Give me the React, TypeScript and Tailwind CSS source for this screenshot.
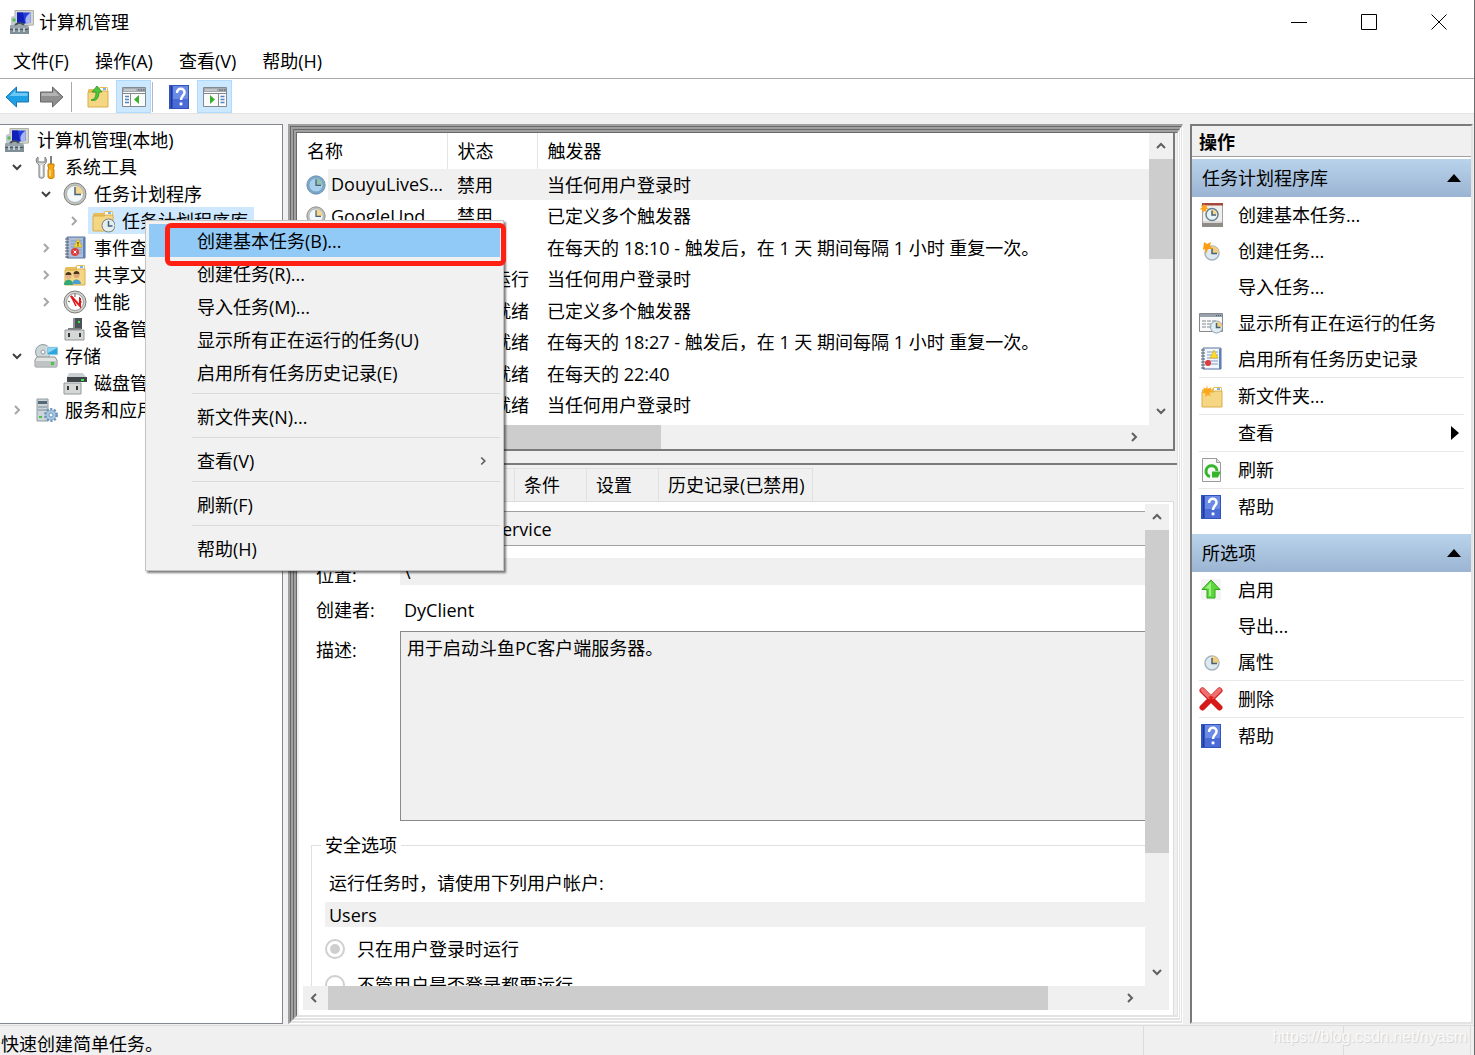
import type { ReactNode } from "react";
import clsx from "clsx";

/* ---------- Icons ---------- */

function Icon({ children, className = "w-6 h-6" }: { children: ReactNode; className?: string }) {
  return (
    <svg viewBox="0 0 24 24" className={clsx("shrink-0", className)} fill="none" aria-hidden="true">
      {children}
    </svg>
  );
}

function ComputerIcon() {
  return (
    <Icon>
      <path d="M5 .5h18.500v14.500L5 16z" fill="#d5d7cf" stroke="#b0b2a8" />
      <path d="M7 2.500h13.500v10.500L7 14z" fill="#2440dc" />
      <path d="M7 2.500h6l2 11-8 .5z" fill="#1020b8" />
      <path d="M20.500 2.500v10.500h-4.500c-2-4 1-8 4.500-10.500z" fill="#a9b4f2" />
      <path d="M1 7l5-2v11H1z" fill="#c4cace" />
      <path d="M2.500 8.500h3v3h-3z" fill="#4fc04a" />
      <path d="M5 17c0-5 9-5 9 0" stroke="#44525c" strokeWidth="1.800" />
      <path d="M0 15.500h18l1 2V24H0z" fill="#7f8f98" />
      <path d="M0 15.500h18v2.500H0z" fill="#98a5ac" />
      <path d="M0 19.500h18" stroke="#4a5962" />
      <path d="M4 18v4M9 18v4M14 18v4" stroke="#dde4e7" strokeWidth="1.500" />
    </Icon>
  );
}

function ToolsIcon() {
  return (
    <Icon>
      <path d="M5 10v12c0 1.500 5 1.500 5 0V10c3-2 3-6 1-8v5H4V2c-3 2-2 6 1 8z" fill="#d5d8d8" stroke="#777b7b" />
      <path d="M7.500 10v11" stroke="#fff" strokeWidth="1.500" />
      <path d="M17 1v9" stroke="#7d8080" strokeWidth="2" />
      <path d="M14 9h6v3l-1 1 1 2v7c0 2-6 2-6 0v-7l1-2-1-1z" fill="#f6a914" stroke="#c57e0b" />
      <path d="M16 15v6" stroke="#ffe08a" strokeWidth="1.500" />
    </Icon>
  );
}

function ClockIcon({ className, blue }: { className?: string; blue?: boolean }) {
  return (
    <Icon className={className}>
      <circle cx="12" cy="12" r="11" fill={blue ? "#7fa9cb" : "#c3c3bd"} stroke={blue ? "#5f8caf" : "#83837e"} />
      <circle cx="12" cy="12" r="8.500" fill={blue ? "#a9cfeb" : "#f3f8fb"} stroke={blue ? "#6f9dbd" : "#a8b2b8"} />
      <path d="M12 12V4a8 8 0 0 1 8 8z" fill={blue ? "#93c0b0" : "#f4d68e"} />
      <path d="M12 5v7.500h6" stroke="#456277" strokeWidth="1.500" />
    </Icon>
  );
}

function SmallClockIcon() {
  return (
    <Icon>
      <circle cx="13" cy="13" r="7" fill="#dfeaf0" stroke="#a5b5bf" strokeWidth="1.500" />
      <path d="M13 13V6a7 7 0 0 1 7 7z" fill="#f2cd7e" />
      <path d="M13 8v5.500h5" stroke="#456277" strokeWidth="1.500" />
    </Icon>
  );
}

function FolderShape() {
  return (
    <>
      <path d="M2 5l1-1h9l2-2h7l1 1v18H2z" fill="#e9bd57" />
      <path d="M14 3h7v3h-7z" fill="#fff" />
      <path d="M17 4h3" stroke="#4d9de0" strokeWidth="1.500" />
      <path d="M2 7h11l2-1h7v16H2z" fill="#f5d682" stroke="#d9ae4c" />
    </>
  );
}

const star = "M8 0l1 5 5-2-2 4 4 2-5 1 2 5-4-2-3 3v-5l-5-1 4-3-2-4 4 2z";

function FolderClockIcon() {
  return (
    <Icon>
      <FolderShape />
      <circle cx="17.500" cy="16.500" r="6.500" fill="#e6eff0" stroke="#74868d" />
      <path d="M17.500 12v5h4" stroke="#456277" strokeWidth="1.500" />
    </Icon>
  );
}

function FolderNewIcon() {
  return (
    <Icon>
      <g transform="translate(1 1)">
        <FolderShape />
      </g>
      <path d={star} fill="#ffa51c" transform="translate(2 1) scale(.75)" />
    </Icon>
  );
}

function FolderUpIcon() {
  return (
    <Icon>
      <FolderShape />
      <path d="M5 15c4-1 5-3 5-8H6l5-6 5 6h-3c0 6-3 10-8 8z" fill="#4ec63e" stroke="#2b9424" strokeWidth=".8" />
    </Icon>
  );
}

function NotebookIcon({ light }: { light?: boolean }) {
  return (
    <Icon>
      <path d="M4 1h18v21H4z" fill={light ? "#f2f6fd" : "#aebdd6"} stroke="#56739f" />
      <path d="M20 2h2v20h-2z" fill="#5c80bd" />
      <path d="M8 5h11M8 8h11M8 11h11M8 14h11M8 17h11" stroke="#7f9cc8" />
      <path d="M2 3h4M2 6h4M2 9h4M2 12h4M2 15h4M2 18h4M2 21h4" stroke="#565f6b" />
      <path d="M15 3l4 8h-8z" fill="#fcdb2c" stroke="#d8aa10" strokeWidth=".6" />
      {!light && <path d="M15 6v2.500M15 9.200v1" stroke="#222" />}
      <circle cx={light ? 9 : 12} cy="16" r={light ? 3 : 4} fill="#e03a3a" />
      {!light && <path d="M10.500 14.500l3 3m0-3l-3 3" stroke="#fff" />}
    </Icon>
  );
}

function SharedFolderIcon() {
  return (
    <Icon>
      <FolderShape />
      <path d="M1 22c0-7 9-7 9 0z" fill="#35a877" />
      <path d="M9 21c0-6 9-6 9 0z" fill="#4d9fd0" />
      <circle cx="5.500" cy="13" r="3" fill="#e3b48b" />
      <circle cx="13.500" cy="12" r="3" fill="#dba77b" />
      <path d="M2.500 12c0-4 6-4 6 0zM10.500 11c0-4 6-4 6 0z" fill="#493422" />
    </Icon>
  );
}

function GaugeIcon() {
  return (
    <Icon>
      <circle cx="12" cy="12" r="11" fill="#d0d0cd" stroke="#7d7d7b" />
      <circle cx="12" cy="12" r="8.500" fill="#fff" stroke="#999" />
      <path d="M5 11l2 1M8 6l1 2M12 4v3M17 7l-1 1M19 12h-2" stroke="#555" />
      <path d="M8 6l9 10V8" stroke="#e21818" strokeWidth="2" />
      <path d="M8 6l5 10" stroke="#e21818" strokeWidth="1.500" />
    </Icon>
  );
}

function DeviceIcon() {
  return (
    <Icon>
      <path d="M10 1h9v11h-9z" fill="#4b5256" />
      <path d="M10 1h2v11h-2z" fill="#8b9295" />
      <path d="M15 4h2v2h-2z" fill="#3ee54a" />
      <path d="M5 11h13v3H5z" fill="#777d80" />
      <path d="M2 13h19v10H2z" fill="#d5d7d7" stroke="#94989a" />
      <path d="M6 16v4M17 16v4" stroke="#33383a" strokeWidth="2" />
    </Icon>
  );
}

function StorageIcon() {
  return (
    <Icon>
      <circle cx="9" cy="8" r="7.500" fill="#ccd6d8" stroke="#929c9e" />
      <circle cx="9" cy="8" r="2" fill="#fff" stroke="#929c9e" />
      <path d="M13 3h11v8H13z" fill="#2fa5dd" stroke="#dce6ea" />
      <path d="M14 4h9l-9 5z" fill="#8bd4f3" />
      <path d="M3 13h18l2 3v6c0 1-1 1-1 1H2c-1 0-1-1-1-1v-6z" fill="#e3e5e5" stroke="#8a8f90" />
      <path d="M2 17h20v5H2z" fill="#bfc3c4" />
      <path d="M17 18h3v3h-3z" fill="#47c441" />
    </Icon>
  );
}

function DiskIcon() {
  return (
    <Icon>
      <path d="M6 2h14l3 4H4z" fill="#ccd0d2" />
      <path d="M4 6h20v5H4z" fill="#3e4448" />
      <path d="M18 8h3v2h-3z" fill="#3ee54a" />
      <path d="M1 12h17v11H1z" fill="#d5d7d7" stroke="#94989a" />
      <path d="M5 15v4M14 15v4" stroke="#33383a" strokeWidth="2" />
    </Icon>
  );
}

function ServiceIcon() {
  return (
    <Icon>
      <path d="M3 1h11v22H3z" fill="#ccd5da" stroke="#8e9ba2" />
      <path d="M4 3h9v3H4z" fill="#536774" />
      <path d="M4 9h9M4 12h9" stroke="#7c8c96" />
      <path d="M5 19h3" stroke="#47c441" strokeWidth="2" />
      <circle cx="17" cy="17" r="5.500" fill="#9bbcd8" stroke="#6c94b8" strokeWidth="3" strokeDasharray="2 1.500" />
      <circle cx="17" cy="17" r="4.500" fill="#a9c8e0" />
      <circle cx="17" cy="17" r="2" fill="#fff" stroke="#6c94b8" />
    </Icon>
  );
}

function HelpIcon() {
  return (
    <Icon>
      <g transform="translate(1 0)">
        <path d="M1 0h20v24H1z" fill="#3153c0" />
        <path d="M5 1h15v22H5z" fill="#6a8ae6" />
        <path d="M5 14h15v9H5z" fill="#4a6bd6" />
        <path d="M3.500 1v22" stroke="#20389a" />
        <path d="M9 8c0-6 8-5 7.500-.500C16.500 10.500 13 11 13 15" stroke="#fff" strokeWidth="2.500" />
        <path d="M11.600 17.500h2.800v2.800h-2.800z" fill="#fff" />
      </g>
    </Icon>
  );
}

function PaneIcon({ side }: { side: "left" | "right" }) {
  return (
    <Icon>
      <path d="M.5 2.500h23v19H.5z" fill="#fbfbfb" stroke="#84898e" />
      <path d="M1 3h22v4H1z" fill="#a4aab0" />
      <path d="M2 5h12" stroke="#dfe2e5" />
      <path d="M16 5h1.500M18.500 5H20M21 5h1.500" stroke="#4c565e" />
      <path d="M1 8.500h22" stroke="#84898e" />
      {side === "left" ? (
        <>
          <path d="M8.500 9v12" stroke="#84898e" />
          <path d="M3 11.500h4M3 14.500h4M3 17.500h4" stroke="#4f86bd" strokeWidth="1.500" />
          <path d="M17 10v9l-5-4.500z" fill="#3bb02f" />
        </>
      ) : (
        <>
          <path d="M15.500 9v12" stroke="#84898e" />
          <path d="M17.500 11.500h4M17.500 14.500h4M17.500 17.500h4" stroke="#4f86bd" strokeWidth="1.500" />
          <path d="M7 10v9l5-4.500z" fill="#3bb02f" />
        </>
      )}
    </Icon>
  );
}

function ArrowIcon({ forward }: { forward?: boolean }) {
  return forward ? (
    <Icon className="w-[25px] h-6">
      <path d="M23.500 12L13 2v5H1v10h12v5z" fill="#8f8f8f" stroke="#666" />
      <path d="M2 8h12V5l6 6H2z" fill="#b4b4b4" />
    </Icon>
  ) : (
    <Icon className="w-[25px] h-6">
      <path d="M.5 12L11 2v5h12v10H11v5z" fill="#1f9fe4" stroke="#1876b5" />
      <path d="M22 8H10V5l-6 6h18z" fill="#6cc8f5" />
    </Icon>
  );
}

function BasicTaskIcon() {
  return (
    <Icon>
      <path d="M3.500 1h20v21h-20z" fill="#f1efed" stroke="#a5a29e" />
      <path d="M3 0h21v2.500H3z" fill="#a5483c" />
      <path d="M3 19.500h21V24H3z" fill="#8f8b87" />
      <path d="M4 18h18v2H4z" fill="#d9d6d3" />
      <circle cx="13" cy="11.500" r="6" fill="#e9f3f7" stroke="#64808f" strokeWidth="1.500" />
      <path d="M13 11.500V6.500a5 5 0 0 1 5 5z" fill="#f4d68e" />
      <path d="M13 7.500v4.500h4" stroke="#456277" strokeWidth="1.500" />
      <path d={star} fill="#ffa51c" transform="scale(.62)" />
    </Icon>
  );
}

function TaskIcon() {
  return (
    <Icon>
      <circle cx="13" cy="14" r="7" fill="#dfeaf0" stroke="#a5b5bf" strokeWidth="1.500" />
      <path d="M13 14V7a7 7 0 0 1 7 7z" fill="#f2cd7e" />
      <path d="M13 9v5.500h5" stroke="#456277" strokeWidth="1.500" />
      <path d="M5 3l3 2 4-2-1 4 3 3-5 0-2 5-1-5-2 1z" fill="#ff9d12" />
    </Icon>
  );
}

function RunningIcon() {
  return (
    <Icon>
      <path d="M.5 2.500h23v18H.5z" fill="#fafafa" stroke="#84898e" />
      <path d="M1 3h22v3H1z" fill="#98a1aa" />
      <path d="M17 4.500h5" stroke="#3f5c83" strokeDasharray="1 1" />
      <path d="M3 10h4M8 10h4M13 10h4M3 13h4M8 13h4M3 16h4M8 16h4" stroke="#7f8a92" />
      <circle cx="17.500" cy="16" r="6" fill="#e1edf4" stroke="#8ba0ad" />
      <path d="M17.500 16v-5.500a6 6 0 0 1 5.500 5.500z" fill="#f2cd7e" />
      <path d="M17.500 12v4.500h4" stroke="#456277" strokeWidth="1.500" />
    </Icon>
  );
}

function RefreshIcon() {
  return (
    <Icon>
      <path d="M3.500.5h14l4 4v19h-18z" fill="#fafafa" stroke="#9b9b9b" />
      <path d="M17.500.5v4h4" fill="#ddd" stroke="#9b9b9b" />
      <path d="M11 18.500a5.500 5.500 0 1 1 7-5.500" stroke="#36b52c" strokeWidth="3" />
      <path d="M13 13.500h9l-3 6-6 0z" fill="#36b52c" />
    </Icon>
  );
}

function EnableIcon() {
  return (
    <Icon>
      <path d="M2 1h20v21H2z" fill="#f4f4f4" />
      <path d="M12 2L3 11.500h5V20h8v-8.500h5z" fill="#5cd83c" stroke="#2fa31c" />
      <path d="M12 4l-6 6.500h4V18h2z" fill="#a0f083" />
    </Icon>
  );
}

function DeleteIcon() {
  return (
    <Icon>
      <path d="M3.500 3.500l17 17M20.500 3.500l-17 17" stroke="#d51a1a" strokeWidth="6" strokeLinecap="round" />
      <path d="M3.500 3l7 7M20.500 3l-7 7" stroke="#ef7272" strokeWidth="4" strokeLinecap="round" />
      <path d="M9 10l3 3 3-3-3-1z" fill="#e02020" />
    </Icon>
  );
}

const chevrons = {
  up: "M4 10l4-4 4 4",
  down: "M4 6l4 4 4-4",
  left: "M10 4L6 8l4 4",
  right: "M6 4l4 4-4 4",
};

function Chevron({ dir, className }: { dir: keyof typeof chevrons; className?: string }) {
  return (
    <svg viewBox="0 0 16 16" className={clsx("h-4", className)} fill="none" aria-hidden="true">
      <path d={chevrons[dir]} stroke="currentColor" strokeWidth="2" />
    </svg>
  );
}

/* ---------- Data ---------- */

const menus = ["文件(F)", "操作(A)", "查看(V)", "帮助(H)"];

type Node = { label: string; level: number; icon: ReactNode; state?: "open" | "closed"; selected?: boolean };

const tree: Node[] = [
  { label: "系统工具", level: 1, icon: <ToolsIcon />, state: "open" },
  { label: "任务计划程序", level: 2, icon: <ClockIcon />, state: "open" },
  { label: "任务计划程序库", level: 3, icon: <FolderClockIcon />, state: "closed", selected: true },
  { label: "事件查看器", level: 2, icon: <NotebookIcon />, state: "closed" },
  { label: "共享文件夹", level: 2, icon: <SharedFolderIcon />, state: "closed" },
  { label: "性能", level: 2, icon: <GaugeIcon />, state: "closed" },
  { label: "设备管理器", level: 2, icon: <DeviceIcon /> },
  { label: "存储", level: 1, icon: <StorageIcon />, state: "open" },
  { label: "磁盘管理", level: 2, icon: <DiskIcon /> },
  { label: "服务和应用程序", level: 1, icon: <ServiceIcon />, state: "closed" },
];

const indent: Record<number, string> = { 1: "pl-[5px]", 2: "pl-[34px]", 3: "pl-[62px]" };

const tasks = [
  { name: "DouyuLiveS...", status: "禁用", trigger: "当任何用户登录时" },
  { name: "GoogleUpd...", status: "禁用", trigger: "已定义多个触发器" },
  { name: "", status: "禁用", trigger: "在每天的 18:10 - 触发后，在 1 天 期间每隔 1 小时 重复一次。" },
  { name: "", status: "正在运行", trigger: "当任何用户登录时" },
  { name: "", status: "准备就绪", trigger: "已定义多个触发器" },
  { name: "", status: "准备就绪", trigger: "在每天的 18:27 - 触发后，在 1 天 期间每隔 1 小时 重复一次。" },
  { name: "", status: "准备就绪", trigger: "在每天的 22:40" },
  { name: "", status: "准备就绪", trigger: "当任何用户登录时" },
];

const tabs = ["常规", "触发器", "操作", "条件", "设置", "历史记录(已禁用)"];

type Action = { label: string; icon?: ReactNode; divider?: boolean; submenu?: boolean };

const libraryActions: Action[] = [
  { label: "创建基本任务...", icon: <BasicTaskIcon /> },
  { label: "创建任务...", icon: <TaskIcon /> },
  { label: "导入任务..." },
  { label: "显示所有正在运行的任务", icon: <RunningIcon /> },
  { label: "启用所有任务历史记录", icon: <NotebookIcon light /> },
  { label: "新文件夹...", icon: <FolderNewIcon />, divider: true },
  { label: "查看", divider: true, submenu: true },
  { label: "刷新", icon: <RefreshIcon />, divider: true },
  { label: "帮助", icon: <HelpIcon />, divider: true },
];

const selectedActions: Action[] = [
  { label: "启用", icon: <EnableIcon /> },
  { label: "导出..." },
  { label: "属性", icon: <SmallClockIcon /> },
  { label: "删除", icon: <DeleteIcon />, divider: true },
  { label: "帮助", icon: <HelpIcon />, divider: true },
];

const contextMenu: Action[] = [
  { label: "创建基本任务(B)..." },
  { label: "创建任务(R)..." },
  { label: "导入任务(M)..." },
  { label: "显示所有正在运行的任务(U)" },
  { label: "启用所有任务历史记录(E)" },
  { label: "新文件夹(N)...", divider: true },
  { label: "查看(V)", divider: true, submenu: true },
  { label: "刷新(F)", divider: true },
  { label: "帮助(H)", divider: true },
];

/* ---------- Parts ---------- */

function TitleBar() {
  return (
    <header className="h-[43px] shrink-0 flex items-center pl-[10px]">
      <ComputerIcon />
      <h1 className="ml-[5px] flex-1">计算机管理</h1>
      <div className="flex h-full">
        <button aria-label="最小化" className="w-[70px] flex items-center justify-center">
          <svg viewBox="0 0 16 16" className="w-4 h-4">
            <path d="M0 8.500h16" stroke="#000" />
          </svg>
        </button>
        <button aria-label="最大化" className="w-[70px] flex items-center justify-center">
          <svg viewBox="0 0 16 16" className="w-4 h-4">
            <path d="M.5.5h15v15H.5z" fill="none" stroke="#000" />
          </svg>
        </button>
        <button aria-label="关闭" className="w-[70px] flex items-center justify-center">
          <svg viewBox="0 0 16 16" className="w-4 h-4">
            <path d="M.5.5l15 15m0-15l-15 15" stroke="#000" />
          </svg>
        </button>
      </div>
    </header>
  );
}

function Toolbar() {
  return (
    <div className="h-[34px] shrink-0 flex items-center pt-px pl-[5px]">
      <button aria-label="后退">
        <ArrowIcon />
      </button>
      <button aria-label="前进" className="ml-[9px]">
        <ArrowIcon forward />
      </button>
      <span className="ml-[7px] w-px h-[30px] bg-[#a8a8a8]" />
      <button aria-label="上移一级" className="ml-[14px]">
        <FolderUpIcon />
      </button>
      <button
        aria-label="显示控制台树"
        className="ml-[6px] w-[35px] h-[33px] flex items-center justify-center bg-[#cce8ff] border border-[#b0dbff]"
      >
        <PaneIcon side="left" />
      </button>
      <span className="ml-px w-px h-[30px] bg-[#b8b8b8]" />
      <button aria-label="帮助" className="ml-[14px]">
        <HelpIcon />
      </button>
      <button
        aria-label="显示操作窗格"
        className="ml-[6px] w-[35px] h-[33px] flex items-center justify-center bg-[#cce8ff] border border-[#b0dbff]"
      >
        <PaneIcon side="right" />
      </button>
    </div>
  );
}

function TreePane() {
  return (
    <nav className="w-[283px] shrink-0 overflow-hidden bg-white border border-l-0 border-[#828790] pt-px whitespace-nowrap">
      <div className="h-[27px] flex items-center pl-[5px] gap-2">
        <ComputerIcon />
        计算机管理(本地)
      </div>
      {tree.map(({ label, level, icon, state, selected }) => (
        <div key={label} className={clsx("h-[27px] flex items-center", indent[level])}>
          <span className="w-6 mr-[2px] flex justify-center">
            {state === "open" && <Chevron dir="down" className="w-4 text-[#404040]" />}
            {state === "closed" && <Chevron dir="right" className="w-4 text-[#a6a6a6]" />}
          </span>
          <span className={clsx("h-full flex items-center gap-[7px] pl-[3px] pr-[6px]", selected && "bg-[#cde8ff]")}>
            {icon}
            {label}
          </span>
        </div>
      ))}
    </nav>
  );
}

// Sunken edge: dark on the top and left, light on the bottom and right
function Bevel({ children }: { children: ReactNode }) {
  return (
    <div className="flex-1 min-w-0 min-h-0 flex border-t-2 border-l-2 border-r border-b border-t-[#a0a0a0] border-l-[#a0a0a0] border-r-white border-b-white">
      <div className="flex-1 min-w-0 min-h-0 flex border-t border-l border-r border-b-2 border-t-[#696969] border-l-[#696969] border-r-[#e3e3e3] border-b-[#e3e3e3]">
        {children}
      </div>
    </div>
  );
}

function TaskList() {
  return (
    <section className="h-[318px] shrink-0 flex flex-col bg-white border-r-2 border-b-2 border-[#7a7a7a] mr-[2px]">
      <div className="flex-1 min-h-0 flex">
        <div className="flex-1 min-w-0 overflow-hidden">
          <table className="w-full table-fixed text-left whitespace-nowrap">
            <thead>
              <tr className="h-[36px]">
                <th className="w-[150px] p-0 pl-[10px] font-normal border-r border-[#e5e5e5]">名称</th>
                <th className="w-[90px] p-0 pl-[10px] font-normal border-r border-[#e5e5e5]">状态</th>
                <th className="p-0 pl-[10px] font-normal">触发器</th>
              </tr>
            </thead>
            <tbody>
              {tasks.map(({ name, status, trigger }, i) => (
                <tr key={i} className="odd:h-[31px] even:h-[32px]">
                  <td className="p-0">
                    {name && (
                      <div className="flex items-center pl-[9px] gap-[2px]">
                        <ClockIcon className="w-5 h-5" blue={i === 0} />
                        <span className={clsx("flex-1 pl-[3px] leading-[31px]", i === 0 && "bg-[#f0f0f0]")}>{name}</span>
                      </div>
                    )}
                  </td>
                  <td className={clsx("p-0 pl-[10px]", i === 0 && "bg-[#f0f0f0]")}>{status}</td>
                  <td className={clsx("p-0 pl-[10px]", i === 0 && "bg-[#f0f0f0]")}>{trigger}</td>
                </tr>
              ))}
            </tbody>
          </table>
        </div>
        <div className="w-6 flex flex-col items-center bg-[#f0f0f0] text-[#606060]">
          <Chevron dir="up" className="w-4 my-[5px]" />
          <span className="w-full h-[100px] bg-[#cdcdcd]" />
          <Chevron dir="down" className="w-4 mt-auto mb-[6px]" />
        </div>
      </div>
      <div className="h-6 flex items-center bg-[#f0f0f0] text-[#606060] pr-[31px]">
        <Chevron dir="left" className="w-4 mx-1" />
        <span className="w-[340px] h-full bg-[#cdcdcd]" />
        <Chevron dir="right" className="w-4 ml-auto" />
      </div>
    </section>
  );
}

function TaskDetails() {
  return (
    <section className="flex-1 min-h-0 flex flex-col mt-3 border-t-2 border-[#7a7a7a]">
      <div role="tablist" className="h-[36px] shrink-0 flex items-end pl-[2px]">
        {tabs.map((tab) => (
          <button
            key={tab}
            role="tab"
            aria-selected={tab === "常规"}
            className="h-[33px] min-w-[72px] pl-[9px] pr-[7px] text-left border-t border-r border-[#e0e0e0]"
          >
            {tab}
          </button>
        ))}
      </div>
      <div className="flex-1 min-h-0 flex flex-col ml-[2px] mr-[3px] pt-[2px] pb-[5px] px-1 bg-white border-t border-r border-[#dcdcdc]">
        <div className="flex-1 min-h-0 flex">
          <div className="flex-1 min-w-0 overflow-hidden">
            <form className="-mr-8 pt-[7px]">
              <div className="grid grid-cols-[84px_1fr] pl-[13px]">
                <label htmlFor="name" className="leading-[35px]">
                  名称:
                </label>
                <input
                  id="name"
                  readOnly
                  value="DouyuLiveService"
                  className="h-[35px] px-1 bg-[#f0f0f0] border-y border-[#a0a0a0] outline-none"
                />
                <label htmlFor="location" className="mt-3 pt-[7px] leading-5">
                  位置:
                </label>
                <input id="location" readOnly value="\" className="mt-3 h-[27px] px-1 bg-[#f0f0f0] outline-none" />
                <span className="mt-3 leading-[27px]">创建者:</span>
                <span className="mt-3 pl-1 leading-[27px]">DyClient</span>
                <label htmlFor="description" className="mt-[7px] pt-[6px] leading-[27px]">
                  描述:
                </label>
                <textarea
                  id="description"
                  readOnly
                  value="用于启动斗鱼PC客户端服务器。"
                  className="mt-[7px] h-[190px] px-[6px] pt-[3px] leading-[27px] resize-none bg-[#f0f0f0] border border-[#8a8a8a] outline-none"
                />
              </div>
              <fieldset className="mt-3 ml-2 pl-[13px] border border-[#e0e0e0]">
                <legend className="-ml-1 px-1 leading-6">安全选项</legend>
                <label htmlFor="account" className="block mt-[14px] pl-1 leading-6">
                  运行任务时，请使用下列用户帐户:
                </label>
                <input
                  id="account"
                  readOnly
                  value="Users"
                  className="block mt-[7px] w-full h-[25px] px-1 bg-[#f0f0f0] outline-none"
                />
                <label className="flex items-center gap-3 mt-[10px] leading-6">
                  <input
                    type="radio"
                    name="run"
                    defaultChecked
                    disabled
                    className="appearance-none w-5 h-5 rounded-full border-2 border-[#cfcfcf] bg-[#cfcfcf] bg-clip-content p-[3px]"
                  />
                  只在用户登录时运行
                </label>
                <label className="flex items-center gap-3 mt-3 leading-6">
                  <input
                    type="radio"
                    name="run"
                    disabled
                    className="appearance-none w-5 h-5 rounded-full border-2 border-[#cfcfcf]"
                  />
                  不管用户是否登录都要运行
                </label>
              </fieldset>
            </form>
          </div>
          <div className="w-6 flex flex-col items-center bg-[#f0f0f0] text-[#606060]">
            <Chevron dir="up" className="w-4 my-[5px]" />
            <span className="w-full h-[323px] bg-[#cdcdcd]" />
            <Chevron dir="down" className="w-4 mt-auto mb-[6px]" />
          </div>
        </div>
        <div className="h-6 flex items-center bg-[#f0f0f0] text-[#606060] pr-[31px]">
          <Chevron dir="left" className="w-4 ml-[3px] mr-[6px]" />
          <span className="w-[720px] h-full bg-[#cdcdcd]" />
          <Chevron dir="right" className="w-4 ml-auto" />
        </div>
      </div>
    </section>
  );
}

function ActionGroup({ title, actions }: { title: string; actions: Action[] }) {
  return (
    <section>
      <h3 className="h-[38px] flex items-center justify-between pl-[10px] pr-[9px] bg-linear-to-b from-[#bad3ec] to-[#9ab4d2]">
        {title}
        <svg viewBox="0 0 16 8" className="w-4 h-2" aria-hidden="true">
          <path d="M8 0l7 8H1z" fill="#000" />
        </svg>
      </h3>
      <ul className="px-[7px]">
        {actions.map(({ label, icon, divider, submenu }) => (
          <li key={label} className={clsx(divider && "border-t border-[#e8e8e8]")}>
            <button className="w-full h-[36px] flex items-center text-left">
              <span className="w-[39px]">{icon}</span>
              {label}
              {submenu && (
                <svg viewBox="0 0 8 14" className="ml-auto mr-[5px] w-2 h-[14px]" aria-hidden="true">
                  <path d="M0 0l8 7-8 7z" fill="#000" />
                </svg>
              )}
            </button>
          </li>
        ))}
      </ul>
    </section>
  );
}

function ActionPane() {
  return (
    <aside className="w-[283px] shrink-0 bg-white border-2 border-t-[#7a7a7a] border-l-[#7a7a7a] border-r-[#e3e3e3] border-b-[#e3e3e3]">
      <h2 className="h-[31px] mb-[2px] pt-[2px] flex items-center pl-[7px] font-bold bg-[#f0f0f0] border-b border-[#a0a0a0]">
        操作
      </h2>
      <div className="flex flex-col gap-[9px]">
        <ActionGroup title="任务计划程序库" actions={libraryActions} />
        <ActionGroup title="所选项" actions={selectedActions} />
      </div>
    </aside>
  );
}

function ContextMenu() {
  return (
    <div className="absolute left-[145px] top-[220px] w-[359px]">
      <ul role="menu" className="p-[3px] pb-[5px] bg-[#f1f1f1] border border-[#c4c4c4] shadow-[2px_2px_2px_#00000080]">
        {contextMenu.map(({ label, divider, submenu }, i) => (
          <li key={label}>
            {divider && <hr className="ml-[43px] mt-1 mb-[6px] border-[#dadada]" />}
            <button
              role="menuitem"
              className={clsx("w-full h-[33px] flex items-center pl-[48px] pr-[10px]", i === 0 && "bg-[#91c9f7]")}
            >
              {label}
              {submenu && <Chevron dir="right" className="ml-auto w-[14px] text-[#606060]" />}
            </button>
          </li>
        ))}
      </ul>
      {/* Highlight around the first command */}
      <div className="absolute left-5 top-[3px] w-[341px] h-[43px] rounded-md border-[5px] border-[#ff2014]" />
    </div>
  );
}

function StatusBar() {
  return (
    <footer className="relative h-[30px] shrink-0 flex border-t border-[#dcdcdc]">
      <p className="flex-1 pl-px pt-[7px] leading-[22px]">快速创建简单任务。</p>
      <span className="w-[200px] border-l border-[#dcdcdc]" />
      <span className="w-[128px] border-x border-[#dcdcdc]" />
      <span className="w-[3px]" />
      <span className="absolute right-[7px] top-0 leading-[22px] font-['Liberation_Sans'] text-base text-[#fafafa] [text-shadow:1px_1px_1px_#d0d0d0]">
        https://blog.csdn.net/nyasm
      </span>
    </footer>
  );
}

export default function App() {
  return (
    <div className="relative h-screen flex flex-col overflow-hidden bg-[#f0f0f0] border-r border-[#6b6b6b] text-[18px] leading-6 text-black font-['Open_Sans','Noto_Sans_CJK_SC',sans-serif]">
      <div className="shrink-0 bg-white border-b border-[#e3e3e3]">
        <TitleBar />
        <div role="menubar" className="h-[36px] flex items-center gap-[26px] pl-[13px] border-b border-[#a8a8a8]">
          {menus.map((menu) => (
            <button key={menu} role="menuitem">
              {menu}
            </button>
          ))}
        </div>
        <Toolbar />
      </div>
      <div className="flex-1 min-h-0 flex pt-[10px] pb-px">
        <TreePane />
        <main className="flex-1 min-w-0 flex ml-[5px] mr-[7px]">
          <Bevel>
            <Bevel>
              <Bevel>
                <div className="flex-1 min-w-0 flex flex-col bg-[#f0f0f0]">
                  <TaskList />
                  <TaskDetails />
                </div>
              </Bevel>
            </Bevel>
          </Bevel>
        </main>
        <ActionPane />
        <span className="w-px" />
      </div>
      <StatusBar />
      <ContextMenu />
    </div>
  );
}
